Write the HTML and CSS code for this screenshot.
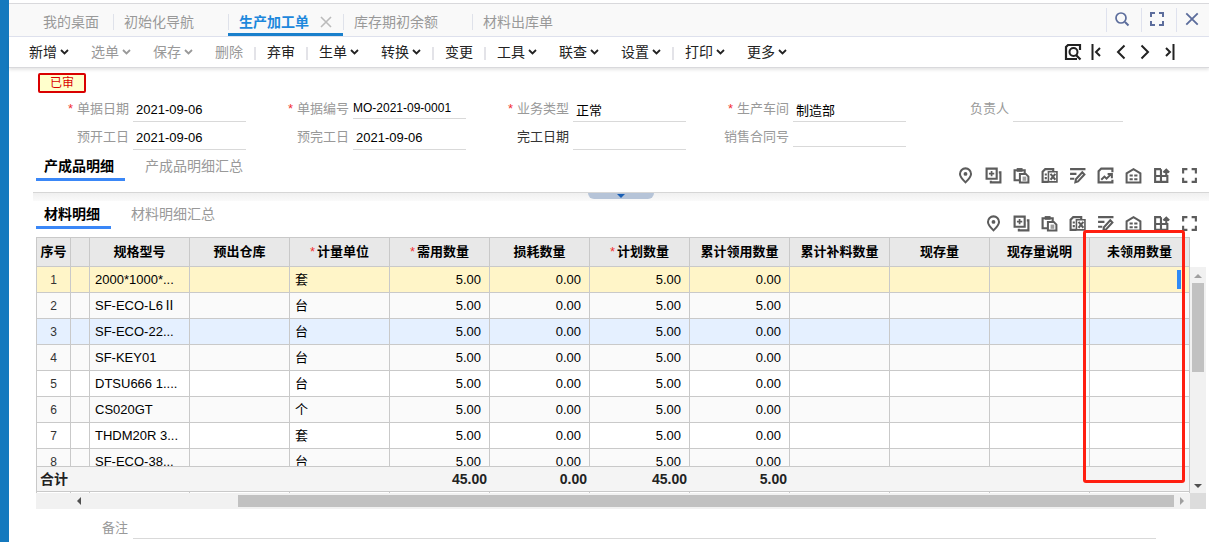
FILE: index.html
```html
<!DOCTYPE html>
<html lang="zh-CN">
<head>
<meta charset="utf-8">
<title>生产加工单</title>
<link rel="stylesheet" href="styles.css">
</head>
<body>
<svg class="sprite" aria-hidden="true">
  <symbol id="chev" viewBox="0 0 9 8"><path d="M1 2l3.500 3.500L8 2" fill="none" stroke="currentColor" stroke-width="1.800"/></symbol>
  <symbol id="close" viewBox="0 0 14 14"><path d="M2 2l10 10M12 2L2 12" fill="none" stroke="currentColor" stroke-width="1.600"/></symbol>
  <symbol id="search" viewBox="0 0 16 16"><circle cx="7" cy="7" r="5" fill="none" stroke="currentColor" stroke-width="1.700"/><path d="M11 11l3.500 3.500" stroke="currentColor" stroke-width="2"/></symbol>
  <symbol id="full" viewBox="0 0 16 16"><path d="M2 6V2h4M10 2h4v4M14 10v4h-4M6 14H2v-4" fill="none" stroke="currentColor" stroke-width="2"/></symbol>
  <symbol id="pagefind" viewBox="0 0 18 18"><path d="M16 7V2H4L2 4v12h11" fill="none" stroke="currentColor" stroke-width="2.200"/><circle cx="9.500" cy="9" r="4" fill="none" stroke="currentColor" stroke-width="2"/><path d="M12 12l4.500 4.500" stroke="currentColor" stroke-width="2.200"/></symbol>
  <symbol id="first" viewBox="0 0 18 18"><path d="M4.500 1v16M12 5L8 9l4 4" fill="none" stroke="currentColor" stroke-width="2"/></symbol>
  <symbol id="prev" viewBox="0 0 18 18"><path d="M12.500 2.500L6 9l6.500 6.500" fill="none" stroke="currentColor" stroke-width="2"/></symbol>
  <symbol id="next" viewBox="0 0 18 18"><path d="M5.500 2.500L12 9l-6.500 6.500" fill="none" stroke="currentColor" stroke-width="2"/></symbol>
  <symbol id="last" viewBox="0 0 18 18"><path d="M13.500 1v16M6 5l4 4-4 4" fill="none" stroke="currentColor" stroke-width="2"/></symbol>
  <symbol id="pin" viewBox="0 0 16 16"><path d="M8 14.500C5 11.500 2.800 9 2.800 6.500a5.200 5.200 0 0 1 10.400 0C13.200 9 11 11.500 8 14.500z" fill="none" stroke="currentColor" stroke-width="1.900"/><circle cx="8" cy="6.500" r="1.800" fill="currentColor"/></symbol>
  <symbol id="addcopy" viewBox="0 0 16 16"><path d="M1.500 1.500h9.500v9.500H1.500z" fill="none" stroke="currentColor" stroke-width="2"/><path d="M13 5h1.500v9.500H5.500V13" fill="none" stroke="currentColor" stroke-width="2"/><path d="M6.200 3.700v5M3.700 6.200h5" stroke="currentColor" stroke-width="1.600"/></symbol>
  <symbol id="paste" viewBox="0 0 16 16"><path d="M6 12.500H1.500V3H11v3" fill="none" stroke="currentColor" stroke-width="2"/><path d="M3.500 1h5.500v3.500H3.500z" fill="currentColor"/><path d="M6.500 6.500h5.500l2.500 2.500v5.500h-8z" fill="none" stroke="currentColor" stroke-width="1.900"/><path d="M9 9h3.500v4H9z" fill="currentColor" opacity=".6"/></symbol>
  <symbol id="delcopy" viewBox="0 0 16 16"><path d="M7 14H1.500V4.500L4 2h7.500v2.500" fill="none" stroke="currentColor" stroke-width="2"/><path d="M3.500 6h2v2h-2zM3.500 9.500h2v2h-2z" fill="currentColor"/><path d="M7 4.500h8v9.500H7z" fill="none" stroke="currentColor" stroke-width="1.500"/><path d="M9 6.500l4.500 5.500M13.500 6.500L9 12" stroke="currentColor" stroke-width="1.900"/></symbol>
  <symbol id="edit" viewBox="0 0 16 16"><path d="M1 2h14.500M1 6.500h6M1 11h4" stroke="currentColor" stroke-width="2"/><path d="M12.500 5l2 2-6 6.500-2.500.800.500-2.800z" fill="none" stroke="currentColor" stroke-width="1.900"/></symbol>
  <symbol id="chart" viewBox="0 0 16 16"><path d="M14.500 5V1.500H4L1.500 4v10.500h13V12" fill="none" stroke="currentColor" stroke-width="2"/><path d="M4 12l3-3 2 2 4.500-4.500M10 6.500h4v4" fill="none" stroke="currentColor" stroke-width="1.900"/></symbol>
  <symbol id="house" viewBox="0 0 16 16"><path d="M1.500 14.500V6L8 2l6.500 4v8.500z" fill="none" stroke="currentColor" stroke-width="1.900"/><path d="M4.300 7h3v2h-3zM8.700 7h3v2h-3zM4.300 10.500h3v2h-3zM8.700 10.500h3v2h-3z" fill="currentColor"/></symbol>
  <symbol id="gridup" viewBox="0 0 16 16"><path d="M7.500 2H2v12h11.500V8.500H2M7.500 2v12M12.500 8.500V3M9.800 5.200l2.700-2.700 2.700 2.700" fill="none" stroke="currentColor" stroke-width="2"/></symbol>
</svg>
<div class="app">
  <div class="rail"></div>
  <main class="main">
    <header class="tabbar">
      <nav class="tabs">
        <a class="tab" href="#">我的桌面</a>
        <a class="tab wide" href="#">初始化导航</a>
        <a class="tab active" href="#">生产加工单<svg class="ic14"><use href="#close"/></svg></a>
        <a class="tab wide" href="#">库存期初余额</a>
        <a class="tab" href="#">材料出库单</a>
      </nav>
      <div class="window-tools">
        <button aria-label="搜索"><svg class="ic16"><use href="#search"/></svg></button>
        <button aria-label="全屏"><svg class="ic16"><use href="#full"/></svg></button>
        <button aria-label="关闭"><svg class="ic16"><use href="#close"/></svg></button>
      </div>
    </header>
    <div class="toolbar">
      <button>新增<svg class="chev"><use href="#chev"/></svg></button>
      <button disabled>选单<svg class="chev"><use href="#chev"/></svg></button>
      <button disabled>保存<svg class="chev"><use href="#chev"/></svg></button>
      <button disabled>删除</button><i class="sep"></i>
      <button>弃审</button><i class="sep"></i>
      <button>生单<svg class="chev"><use href="#chev"/></svg></button>
      <button>转换<svg class="chev"><use href="#chev"/></svg></button><i class="sep"></i>
      <button>变更</button><i class="sep"></i>
      <button>工具<svg class="chev"><use href="#chev"/></svg></button>
      <button>联查<svg class="chev"><use href="#chev"/></svg></button>
      <button>设置<svg class="chev"><use href="#chev"/></svg></button><i class="sep"></i>
      <button>打印<svg class="chev"><use href="#chev"/></svg></button>
      <button>更多<svg class="chev"><use href="#chev"/></svg></button>
      <div class="pager">
        <button aria-label="查找单据"><svg class="ic18"><use href="#pagefind"/></svg></button>
        <button aria-label="首张"><svg class="ic18"><use href="#first"/></svg></button>
        <button aria-label="上一张"><svg class="ic18"><use href="#prev"/></svg></button>
        <button aria-label="下一张"><svg class="ic18"><use href="#next"/></svg></button>
        <button aria-label="末张"><svg class="ic18"><use href="#last"/></svg></button>
      </div>
    </div>
    <div class="status">已审</div>
    <form class="form">
      <div class="field"><label for="f1"><b>*</b>单据日期</label><input id="f1" type="text" value="2021-09-06"></div>
      <div class="field"><label for="f2"><b>*</b>单据编号</label><input id="f2" class="code" type="text" value="MO-2021-09-0001"></div>
      <div class="field"><label for="f3"><b>*</b>业务类型</label><input id="f3" type="text" value="正常"></div>
      <div class="field"><label for="f4"><b>*</b>生产车间</label><input id="f4" type="text" value="制造部"></div>
      <div class="field"><label for="f5">负责人</label><input id="f5" type="text"></div>
      <div class="field"><label for="f6">预开工日</label><input id="f6" type="text" value="2021-09-06"></div>
      <div class="field"><label for="f7">预完工日</label><input id="f7" type="text" value="2021-09-06"></div>
      <div class="field"><label class="dark" for="f8">完工日期</label><input id="f8" type="text"></div>
      <div class="field"><label for="f9">销售合同号</label><input id="f9" class="code" type="text"></div>
    </form>
    <div class="section-head product">
      <a class="subtab on" href="#">产成品明细</a><a class="subtab" href="#">产成品明细汇总</a>
      <div class="row-tools">
        <button aria-label="定位"><svg class="ic17"><use href="#pin"/></svg></button>
        <button aria-label="复制行"><svg class="ic17"><use href="#addcopy"/></svg></button>
        <button aria-label="粘贴"><svg class="ic17"><use href="#paste"/></svg></button>
        <button aria-label="删除行"><svg class="ic17"><use href="#delcopy"/></svg></button>
        <button aria-label="批改"><svg class="ic17"><use href="#edit"/></svg></button>
        <button aria-label="图表"><svg class="ic17"><use href="#chart"/></svg></button>
        <button aria-label="仓库"><svg class="ic17"><use href="#house"/></svg></button>
        <button aria-label="栏目"><svg class="ic17"><use href="#gridup"/></svg></button>
        <button aria-label="放大"><svg class="ic17"><use href="#full"/></svg></button>
      </div>
    </div>
    <div class="splitter"><button class="handle" aria-label="收起"></button></div>
    <div class="section-head material">
      <a class="subtab on" href="#">材料明细</a><a class="subtab" href="#">材料明细汇总</a>
      <div class="row-tools">
        <button aria-label="定位"><svg class="ic17"><use href="#pin"/></svg></button>
        <button aria-label="复制行"><svg class="ic17"><use href="#addcopy"/></svg></button>
        <button aria-label="粘贴"><svg class="ic17"><use href="#paste"/></svg></button>
        <button aria-label="删除行"><svg class="ic17"><use href="#delcopy"/></svg></button>
        <button aria-label="批改"><svg class="ic17"><use href="#edit"/></svg></button>
        <button aria-label="仓库"><svg class="ic17"><use href="#house"/></svg></button>
        <button aria-label="栏目"><svg class="ic17"><use href="#gridup"/></svg></button>
        <button aria-label="放大"><svg class="ic17"><use href="#full"/></svg></button>
      </div>
    </div>
    <div class="grid">
      <div class="viewport">
        <table>
          <colgroup><col class="c-no"><col class="c-mark"><col span="11"></colgroup>
          <thead><tr><th>序号</th><th></th><th>规格型号</th><th>预出仓库</th><th><i>*</i>计量单位</th><th><i>*</i>需用数量</th><th>损耗数量</th><th><i>*</i>计划数量</th><th>累计领用数量</th><th>累计补料数量</th><th>现存量</th><th>现存量说明</th><th>未领用数量</th></tr></thead>
          <tbody>
            <tr class="current"><td>1</td><td></td><td>2000*1000*...</td><td></td><td>套</td><td class="n">5.00</td><td class="n">0.00</td><td class="n">5.00</td><td class="n">0.00</td><td></td><td></td><td></td><td></td></tr>
            <tr><td>2</td><td></td><td>SF-ECO-L6Ⅱ</td><td></td><td>台</td><td class="n">5.00</td><td class="n">0.00</td><td class="n">5.00</td><td class="n">5.00</td><td></td><td></td><td></td><td></td></tr>
            <tr class="hover"><td>3</td><td></td><td>SF-ECO-22...</td><td></td><td>台</td><td class="n">5.00</td><td class="n">0.00</td><td class="n">5.00</td><td class="n">0.00</td><td></td><td></td><td></td><td></td></tr>
            <tr><td>4</td><td></td><td>SF-KEY01</td><td></td><td>台</td><td class="n">5.00</td><td class="n">0.00</td><td class="n">5.00</td><td class="n">0.00</td><td></td><td></td><td></td><td></td></tr>
            <tr><td>5</td><td></td><td>DTSU666 1....</td><td></td><td>台</td><td class="n">5.00</td><td class="n">0.00</td><td class="n">5.00</td><td class="n">0.00</td><td></td><td></td><td></td><td></td></tr>
            <tr><td>6</td><td></td><td>CS020GT</td><td></td><td>个</td><td class="n">5.00</td><td class="n">0.00</td><td class="n">5.00</td><td class="n">0.00</td><td></td><td></td><td></td><td></td></tr>
            <tr><td>7</td><td></td><td>THDM20R 3...</td><td></td><td>套</td><td class="n">5.00</td><td class="n">0.00</td><td class="n">5.00</td><td class="n">0.00</td><td></td><td></td><td></td><td></td></tr>
            <tr><td>8</td><td></td><td>SF-ECO-38...</td><td></td><td>台</td><td class="n">5.00</td><td class="n">0.00</td><td class="n">5.00</td><td class="n">0.00</td><td></td><td></td><td></td><td></td></tr>
            <tr><td></td><td></td><td></td><td></td><td></td><td></td><td></td><td></td><td></td><td></td><td></td><td></td><td></td></tr>
          </tbody>
          <tfoot><tr><td colspan="5">合计</td><td class="n">45.00</td><td class="n">0.00</td><td class="n">45.00</td><td class="n">5.00</td><td></td><td></td><td></td><td></td></tr></tfoot>
        </table>
      </div>
      <div class="vbar"><span class="arrow up"></span><span class="vthumb"></span><span class="arrow down"></span></div>
      <div class="hbar"><span class="arrow left"></span><span class="hthumb"></span><span class="arrow right"></span></div>
      <div class="corner"></div>
      <div class="callout"></div>
      <div class="cell-mark"></div>
    </div>
    <div class="remark"><label for="memo">备注</label><input id="memo" type="text"></div>
  </main>
</div>
</body>
</html>
```

FILE: styles.css
```css
* { box-sizing: border-box; }
body {
  margin: 0;
  background: #fff;
  color: #222;
  font: 13px/18px "Liberation Sans", "Noto Sans CJK SC", sans-serif;
  overflow: hidden;
}
.sprite { display: none; }
button { border: 0; padding: 0; background: none; font: inherit; color: inherit; }
a { color: inherit; text-decoration: none; }
svg { display: block; flex: none; }
.ic14 { width: 14px; height: 14px; }
.ic16 { width: 16px; height: 16px; }
.ic17 { width: 17px; height: 17px; }
.ic18 { width: 18px; height: 18px; }
.chev { width: 9px; height: 8px; }

.app { display: flex; min-height: 100vh; }
.rail { width: 9px; background: #1479be; }
.main { flex: 1; min-width: 0; }

/* document tabs */
.tabbar {
  display: flex;
  justify-content: space-between;
  height: 34px;
  margin-top: 3px;
  padding-left: 23px;
  background: #f9f9f9;
  border-top: 1px solid #d9d9dc;
  border-bottom: 1px solid #dfe2ee;
}
.tabs { display: flex; }
.tab {
  position: relative;
  display: flex;
  align-items: center;
  padding: 4px 14px 0 11px;
  font-size: 14px;
  color: #999;
}
.tab.wide { padding-right: 34px; }
.tab + .tab::before {
  content: "";
  position: absolute;
  left: 0;
  top: 10px;
  width: 1px;
  height: 16px;
  background: #dfe2ea;
}
.tab.active {
  gap: 10px;
  padding-right: 10px;
  padding-top: 7px;
  color: #1e88dc;
  font-weight: bold;
  border-bottom: 3px solid #1a80cc;
}
.tab.active svg { color: #bbb; }
.window-tools { display: flex; padding: 4px 0; }
.window-tools button {
  display: flex;
  align-items: center;
  width: 35px;
  padding: 0 0 2px 7px;
  border-left: 1px solid #dfe2ee;
  color: #5c6d9c;
}
.window-tools button:last-child { width: 33px; }

/* command bar */
.toolbar {
  display: flex;
  align-items: center;
  height: 31px;
  padding-left: 9px;
  border-bottom: 1px solid #d9d9dc;
  box-shadow: 0 2px 3px rgba(0, 0, 0, .1);
  font-size: 14px;
}
.toolbar > button { display: flex; align-items: center; gap: 3px; padding: 0 11px; }
.toolbar > button:disabled { color: #999; }
.sep { width: 2px; height: 13px; margin-top: 2px; background: #e3e3e8; }
.pager { display: flex; gap: 6px; margin-left: auto; padding-right: 31px; }

.status {
  width: 48px;
  height: 20px;
  margin: 5px 0 5px 29px;
  border: 2px solid #d90000;
  border-radius: 2px;
  background: #ffc;
  color: #d90000;
  font-size: 12px;
  line-height: 16px;
  text-align: center;
}

/* document header fields */
.form {
  display: grid;
  grid-template-columns: repeat(5, minmax(0, 1fr));
  row-gap: 4px;
  padding: 0 83px 0 17px;
}
.field { display: flex; gap: 4px; height: 24px; padding-right: 3px; }
.field:nth-child(5n) { padding-right: 3px; }
.field label { width: 103px; flex: none; line-height: 22px; text-align: right; color: #999; }
.field label.dark { color: #333; }
.field label b { margin-right: 4px; color: #f23030; font-weight: normal; }
input {
  flex: 1;
  min-width: 0;
  height: 24px;
  padding: 0 3px;
  border: 0;
  border-bottom: 1px solid #d9d9d9;
  background: none;
  color: #000;
  font: inherit;
  outline: 0;
}
.field { padding-right: 0; }
input.code { height: 21px; padding: 0; font-size: 12px; }

.section-head { display: flex; align-items: flex-start; padding-left: 27px; padding-right: 6px; }
.section-head.product { padding-top: 4px; padding-bottom: 9px; }
.section-head.material { padding-top: 1px; padding-bottom: 6px; }
.subtab {
  height: 27px;
  padding: 0 12px;
  border-bottom: 3px solid transparent;
  font-size: 14px;
  line-height: 24px;
  color: #999;
}
.subtab.on { padding: 0 11px 0 8px; border-color: #3a87f7; color: #000; font-weight: bold; }
.subtab.on + .subtab { margin-left: 8px; }
.row-tools { display: flex; margin: 13px 0 0 auto; color: #5c5c5c; }
.row-tools button { display: flex; align-items: center; justify-content: center; width: 28px; height: 16px; }

.splitter {
  display: flex;
  justify-content: center;
  height: 9px;
  margin-left: 24px;
  border-top: 1px solid #d6d6d6;
  background: linear-gradient(#f0f0f0, #fafafa);
}
.handle { width: 66px; height: 6px; border-radius: 0 0 8px 8px; background: #b6c4d8; }
.handle::after {
  content: "";
  display: block;
  width: 0;
  margin: 0 auto;
  border: 4px solid transparent;
  border-top-color: #1a5fb4;
  border-bottom: 0;
}

/* detail grid */
.grid {
  position: relative;
  display: grid;
  grid-template-columns: minmax(0, 1fr) 16px;
  margin: 0 3px 0 27px;
}
.viewport { max-height: 256px; overflow: hidden; }
table { width: 100%; table-layout: fixed; border-collapse: separate; border-spacing: 0; }
.c-no { width: 35px; }
.c-mark { width: 19px; }
th, td { padding: 0; border-right: 1px solid #c9c9c9; border-bottom: 1px solid #c9c9c9; white-space: nowrap; }
th:first-child, td:first-child { border-left: 1px solid #c9c9c9; }
th { height: 30px; border-top: 1px solid #c9c9c9; background: #e8e8e8; color: #000; }
th i { margin-right: 2px; color: #f23030; font-style: normal; font-weight: normal; }
tbody td { height: 26px; padding-left: 5px; color: #000; }
tbody td:first-child { padding: 0; text-align: center; font-size: 12px; color: #333; }
tbody tr:nth-child(even) { background: #fafafa; }
tbody tr.current { background: #fff5c8; }
tbody tr.hover { background: #e5f0ff; }
tbody td.n { padding: 0 8px 0 0; text-align: right; }
tfoot td {
  position: sticky;
  bottom: 1px;
  height: 26px;
  padding-left: 3px;
  border-top: 1px solid #c9c9c9;
  border-right: 0;
  background: #f4f4f4;
  font-size: 14px;
  font-weight: bold;
}
tfoot td:last-child { border-right: 1px solid #c9c9c9; }
tfoot td.n { padding: 0 3px 0 0; text-align: right; }

.vbar {
  display: flex;
  flex-direction: column;
  align-items: center;
  margin-top: 30px;
  padding: 7px 0 5px;
  background: #f1f1f1;
}
.vthumb { width: 12px; height: 89px; margin: 5px 0 auto; background: #c1c1c1; }
.hbar { display: flex; align-items: center; height: 16px; padding: 0 6px 0 41px; background: #f1f1f1; }
.hthumb { flex: 1; height: 12px; margin: 0 6px 0 157px; background: #c1c1c1; }
.corner { background: #dcdcdc; }
.arrow { border: 4px solid transparent; }
.up { border-top: 0; border-bottom-color: #a0a0a0; }
.down { border-bottom: 0; border-top-color: #505050; }
.left { border-left: 0; border-right-color: #505050; }
.right { border-right: 0; border-left-color: #a0a0a0; }
.callout {
  position: absolute;
  top: -7px;
  right: 21px;
  width: 102px;
  height: 253px;
  border: 3px solid #ff1e10;
  border-radius: 3px;
}
.cell-mark { position: absolute; top: 33px; right: 25px; width: 4px; height: 19px; background: #2f8bf7; }

.remark { display: flex; gap: 5px; padding: 6px 53px 0 93px; }
.remark label { line-height: 26px; color: #999; }
```
